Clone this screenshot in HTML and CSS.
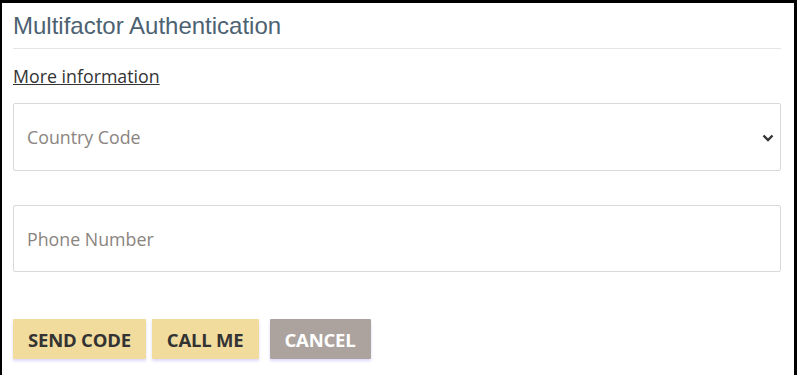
FILE: index.html
```html
<!DOCTYPE html>
<html>
<head>
  <title>Multifactor Authentication</title>
  <link rel="stylesheet" href="styles.css">
</head>
<body>
  <div class="frame">
    <h1 class="title">Multifactor Authentication</h1>
    <a class="more-link" href="#">More information</a>

    <div class="field select-field">
      <select class="control">
        <option>Country Code</option>
      </select>
      <svg class="chevron" width="12" height="8" viewBox="0 0 12 8">
        <path d="M1.5 1.5 L6 6 L10.5 1.5" fill="none" stroke="#333" stroke-width="2.4"/>
      </svg>
    </div>

    <div class="field phone-field">
      <input class="control" type="text" placeholder="Phone Number">
    </div>

    <div class="actions">
      <button class="btn btn-primary">Send Code</button>
      <button class="btn btn-primary btn-call">Call Me</button>
      <button class="btn btn-cancel">Cancel</button>
    </div>
  </div>
</body>
</html>
```

FILE: styles.css
```css
html, body {
  margin: 0;
  padding: 0;
  background: #000;
}
.frame {
  box-sizing: border-box;
  height: 375px;
  margin: 3px 3px 0 2px;
  padding: 0 13px 0 11px;
  background: #fff;
  border-bottom: 2px solid #8a8a8a;
  font-family: "Open Sans", sans-serif;
  color: #333;
}
.title {
  margin: 0;
  padding: 9px 0 8px;
  font-family: "Liberation Sans", Arial, sans-serif;
  font-size: 24px;
  font-weight: normal;
  line-height: 28px;
  color: #4c6272;
  border-bottom: 1px solid #e5e5e5;
}
.more-link {
  display: block;
  width: max-content;
  margin-top: 15px;
  font-size: 17.8px;
  line-height: 24px;
  color: #333;
  text-decoration: underline;
}
.field {
  position: relative;
  margin-top: 15px;
}
.control {
  box-sizing: border-box;
  display: block;
  width: 100%;
  height: 68px;
  padding: 0 13px;
  border: 1px solid #d9d9d9;
  border-radius: 2px;
  background: #fff;
  font-family: "Open Sans", sans-serif;
  font-size: 17.8px;
  color: #8a8480;
  outline: none;
  appearance: none;
  -webkit-appearance: none;
}
.control::placeholder {
  color: #8a8480;
}
.phone-field {
  margin-top: 34px;
}
.phone-field .control {
  height: 67px;
}
.chevron {
  position: absolute;
  right: 7px;
  top: 31px;
  pointer-events: none;
}
.actions {
  margin-top: 47px;
  display: flex;
}
.btn {
  height: 40px;
  padding: 0 15px;
  border: none;
  border-radius: 1px;
  font-family: "Open Sans", sans-serif;
  font-size: 18.5px;
  font-weight: bold;
  text-transform: uppercase;
  letter-spacing: -0.2px;
  cursor: pointer;
  box-shadow: 0 2px 3px rgba(110, 100, 240, 0.25);
}
.btn-primary {
  background: #f1dc9d;
  color: #333;
}
.btn-call {
  margin-left: 6px;
}
.btn-cancel {
  margin-left: 11px;
  background: #aca39e;
  color: #fff;
}
```
